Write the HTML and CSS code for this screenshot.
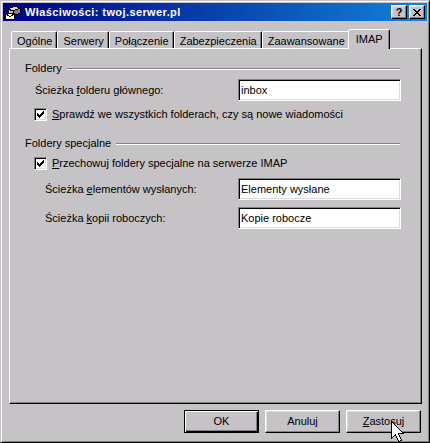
FILE: index.html
```html
<!DOCTYPE html>
<html lang="pl">
<head>
<meta charset="utf-8">
<title>Właściwości: twoj.serwer.pl</title>
<link rel="stylesheet" href="styles.css">
</head>
<body>
<div class="window">
  <div class="titlebar">
    <svg class="app-icon" width="16" height="16" viewBox="0 0 16 16" shape-rendering="crispEdges">
      <polygon points="3,5 10,2 15,4 8,7" fill="#dedbde" stroke="#000" stroke-width="1"/>
      <polygon points="8,7 15,4 15,9 8,12" fill="#848284" stroke="#000" stroke-width="1"/>
      <polygon points="3,5 8,7 8,12 3,10" fill="#c6c3c6" stroke="#000" stroke-width="1"/>
      <rect x="0.5" y="9.5" width="9" height="6" fill="#ffffc6" stroke="#000"/>
      <polyline points="0.5,9.5 5,13 9.5,9.5" fill="none" stroke="#000"/>
    </svg>
    <span class="title-text">Właściwości: twoj.serwer.pl</span>
    <div class="caption-buttons">
      <div class="cap-btn help">?</div>
      <div class="cap-btn">
        <svg width="8" height="7" viewBox="0 0 8 7" shape-rendering="crispEdges">
          <path d="M0 0h2v1h-2z M6 0h2v1h-2z M1 1h2v1h-2z M5 1h2v1h-2z M2 2h4v1h-4z M3 3h2v1h-2z M2 4h4v1h-4z M1 5h2v1h-2z M5 5h2v1h-2z M0 6h2v1h-2z M6 6h2v1h-2z" fill="#000"/>
        </svg>
      </div>
    </div>
  </div>

  <div class="dialog-body">
    <div class="tabs">
      <div class="tab">Ogólne</div>
      <div class="tab">Serwery</div>
      <div class="tab">Połączenie</div>
      <div class="tab">Zabezpieczenia</div>
      <div class="tab">Zaawansowane</div>
      <div class="tab active">IMAP</div>
    </div>

    <div class="panel">
      <div class="group-head">
        <span>Foldery</span>
        <div class="etch"></div>
      </div>
      <div class="field-row first">
        <span class="label indent1">Ścieżka <u>f</u>olderu głównego:</span>
        <input class="text-input" type="text" value="inbox">
      </div>
      <div class="check-row check-first">
        <span class="checkbox">
          <svg width="7" height="7" viewBox="0 0 7 7" shape-rendering="crispEdges"><path d="M0 2h1v3h-1z M1 3h1v3h-1z M2 4h1v3h-1z M3 3h1v3h-1z M4 2h1v3h-1z M5 1h1v3h-1z M6 0h1v3h-1z" fill="#000"/></svg>
        </span>
        <span><u>S</u>prawdź we wszystkich folderach, czy są nowe wiadomości</span>
      </div>

      <div class="group-head second">
        <span>Foldery specjalne</span>
        <div class="etch"></div>
      </div>
      <div class="check-row check-second">
        <span class="checkbox">
          <svg width="7" height="7" viewBox="0 0 7 7" shape-rendering="crispEdges"><path d="M0 2h1v3h-1z M1 3h1v3h-1z M2 4h1v3h-1z M3 3h1v3h-1z M4 2h1v3h-1z M5 1h1v3h-1z M6 0h1v3h-1z" fill="#000"/></svg>
        </span>
        <span><u>P</u>rzechowuj foldery specjalne na serwerze IMAP</span>
      </div>
      <div class="field-row sent">
        <span class="label indent2">Ścieżka <u>e</u>lementów wysłanych:</span>
        <input class="text-input" type="text" value="Elementy wysłane">
      </div>
      <div class="field-row drafts">
        <span class="label indent2">Ścieżka <u>k</u>opii roboczych:</span>
        <input class="text-input" type="text" value="Kopie robocze">
      </div>
    </div>

    <div class="buttons">
      <div class="btn default">OK</div>
      <div class="btn">Anuluj</div>
      <div class="btn"><u>Z</u>astosuj</div>
    </div>
  </div>

  <svg class="cursor" width="13" height="22" viewBox="0 0 13 22" shape-rendering="crispEdges">
    <polygon points="0.5,0.5 0.5,17.5 4.5,13.5 7.5,20.5 10.5,19.5 7.5,12.5 12.5,12.5" fill="#fff" stroke="#000" stroke-width="1"/>
  </svg>
</div>
</body>
</html>
```

FILE: styles.css
```css
html, body {
  margin: 0;
  padding: 0;
}

body {
  width: 430px;
  height: 443px;
  overflow: hidden;
  background: #c6c3c6;
  font-family: "Liberation Sans", Arial, sans-serif;
  font-size: 11px;
  line-height: 13px;
  color: #000;
}

u {
  text-decoration: underline;
  text-underline-offset: 1px;
}

.window {
  position: relative;
  box-sizing: border-box;
  width: 430px;
  height: 443px;
  display: flex;
  flex-direction: column;
  padding: 2px;
  background: #c6c3c6;
  border: 1px solid;
  border-color: #c6c3c6 #000 #000 #c6c3c6;
  box-shadow: inset 1px 1px #fff, inset -1px -1px #848284;
}

/* Title bar */
.titlebar {
  height: 18px;
  display: flex;
  align-items: center;
  background: linear-gradient(to right, #000084, #1084d6);
  color: #fff;
}

.app-icon {
  flex: none;
  margin-left: 2px;
  margin-right: 4px;
}

.title-text {
  font-weight: bold;
  font-size: 11px;
  letter-spacing: 0.4px;
  white-space: nowrap;
}

.caption-buttons {
  margin-left: auto;
  margin-right: 2px;
  display: flex;
  gap: 2px;
}

.cap-btn {
  box-sizing: border-box;
  width: 16px;
  height: 14px;
  display: flex;
  align-items: center;
  justify-content: center;
  background: #c6c3c6;
  border: 1px solid;
  border-color: #fff #000 #000 #fff;
  box-shadow: inset -1px -1px #848284, inset 1px 1px #dedbde;
  color: #000;
}

.cap-btn.help {
  font-weight: bold;
  font-size: 11px;
  line-height: 12px;
}

/* Body */
.dialog-body {
  flex: 1;
  display: flex;
  flex-direction: column;
  padding: 8px 5px 7px 6px;
}

.tabs {
  height: 19px;
  display: flex;
  align-items: flex-end;
  padding-left: 2px;
}

.tab {
  box-sizing: border-box;
  padding: 3px 4px 0 5px;
  background: #c6c3c6;
  border: 1px solid;
  border-bottom: none;
  border-color: #fff #000 transparent #fff;
  border-radius: 2px 2px 0 0;
  box-shadow: inset -1px 0 #848284;
  white-space: nowrap;
}

.tab.active {
  position: relative;
  z-index: 1;
  margin: 0 -2px -1px -2px;
  padding: 3px 6px 3px 7px;
}

.panel {
  box-sizing: border-box;
  height: 356px;
  padding: 13px 20px 0 15px;
  border: 1px solid;
  border-color: #fff #000 #000 #fff;
  box-shadow: inset -1px -1px #848284;
}

.group-head {
  height: 13px;
  display: flex;
  align-items: flex-start;
  gap: 5px;
}

.group-head.second {
  margin-top: 16px;
}

.etch {
  flex: 1;
  height: 0;
  margin-top: 6px;
  margin-right: 1px;
  border-top: 1px solid #848284;
  border-bottom: 1px solid #fff;
}

.field-row {
  height: 22px;
  display: flex;
  align-items: center;
  justify-content: space-between;
}

.field-row.first { margin-top: 4px; }
.field-row.sent { margin-top: 8px; }
.field-row.drafts { margin-top: 7px; }

.label.indent1 { padding-left: 10px; }
.label.indent2 { padding-left: 20px; }

.text-input {
  box-sizing: border-box;
  width: 163px;
  height: 22px;
  margin: 0;
  padding: 0 2px;
  font-family: "Liberation Sans", Arial, sans-serif;
  font-size: 11px;
  color: #000;
  background: #fff;
  border: 1px solid;
  border-color: #848284 #fff #fff #848284;
  box-shadow: inset 1px 1px #000, inset -1px -1px #dedbde;
  outline: none;
}

.check-row {
  height: 13px;
  display: flex;
  align-items: center;
  gap: 5px;
  padding-left: 9px;
  white-space: nowrap;
}

.check-row.check-first { margin-top: 7px; }
.check-row.check-second { margin-top: 7px; }

.checkbox {
  box-sizing: border-box;
  flex: none;
  width: 13px;
  height: 13px;
  display: flex;
  align-items: center;
  justify-content: center;
  background: #fff;
  border: 1px solid;
  border-color: #848284 #fff #fff #848284;
  box-shadow: inset 1px 1px #000, inset -1px -1px #dedbde;
}

/* Buttons */
.buttons {
  margin-top: 6px;
  padding-right: 1px;
  display: flex;
  justify-content: flex-end;
  gap: 6px;
}

.btn {
  box-sizing: border-box;
  width: 75px;
  height: 23px;
  display: flex;
  align-items: center;
  justify-content: center;
  background: #c6c3c6;
  border: 1px solid;
  border-color: #fff #000 #000 #fff;
  box-shadow: inset -1px -1px #848284, inset 1px 1px #dedbde;
}

.btn.default {
  border-color: #000;
  box-shadow: inset 1px 1px #fff, inset -1px -1px #000, inset -2px -2px #848284;
}

/* Mouse pointer over the "Zastosuj" button */
.cursor {
  position: absolute;
  left: 390px;
  top: 420px;
  z-index: 5;
}
```
